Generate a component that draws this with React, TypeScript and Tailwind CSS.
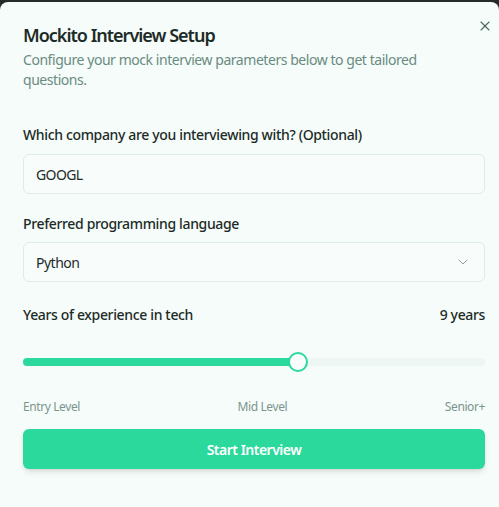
import { X, ChevronDown } from "lucide-react";

export default function App() {
  const years = 9;
  const pct = 59.5;

  return (
    <div className="min-h-screen bg-[#262a29] pt-[2px] font-['Noto_Sans','Open_Sans',sans-serif]">
      <div className="relative min-h-[505px] rounded-t-lg bg-[#f6fcfa] pl-[23px] pr-[14px] pt-[21px]">
        <button className="absolute right-[6px] top-[16px] text-[#4a6660]">
          <X className="h-4 w-4" strokeWidth={1.6} />
        </button>

        {/* Header */}
        <h2 className="text-[18px] font-semibold leading-[24px] tracking-[-1px] text-[#1c2b27]">
          Mockito Interview Setup
        </h2>
        <p className="mt-[3px] pr-[40px] text-[14px] leading-[20px] tracking-[-0.45px] text-[#6a8b81]">
          Configure your mock interview parameters below to get tailored questions.
        </p>

        {/* Company */}
        <label className="mt-[35px] block text-[14px] font-medium leading-[20px] tracking-[-0.35px] text-[#1c2b27]">
          Which company are you interviewing with? (Optional)
        </label>
        <div className="mt-[9px] flex h-[40px] items-center rounded-md border border-[#e1ebe8] bg-[#f8fcfb] px-[12px] text-[14px] tracking-[-0.6px] text-[#1c2b27]">
          GOOGL
        </div>

        {/* Language */}
        <label className="mt-[20px] block text-[14px] font-medium leading-[20px] tracking-[-0.35px] text-[#1c2b27]">
          Preferred programming language
        </label>
        <div className="mt-[8px] flex h-[40px] items-center justify-between rounded-md border border-[#e1ebe8] bg-[#f8fcfb] pl-[12px] pr-[13px] text-[14px] tracking-[-0.5px] text-[#1c2b27]">
          <span>Python</span>
          <ChevronDown className="h-4 w-4 text-[#8aa39c]" strokeWidth={1.5} />
        </div>

        {/* Experience */}
        <div className="mt-[23px] flex items-center justify-between text-[14px] font-medium leading-[20px] tracking-[-0.35px] text-[#1c2b27]">
          <span>Years of experience in tech</span>
          <span>{years} years</span>
        </div>
        <div className="relative mt-[33px] h-[8px] rounded-full bg-[#edf6f2]">
          <div className="h-full rounded-full bg-[#2ad99b]" style={{ width: `${pct}%` }} />
          <div
            className="absolute top-1/2 h-[20px] w-[20px] -translate-x-1/2 -translate-y-1/2 rounded-full border-2 border-[#2ad99b] bg-[#f8fcfb]"
            style={{ left: `${pct}%` }}
          />
        </div>
        <div className="mt-[33px] flex justify-between text-[12px] leading-[16px] tracking-[-0.4px] text-[#7a958d]">
          <span>Entry Level</span>
          <span>Mid Level</span>
          <span>Senior+</span>
        </div>

        <button className="mt-[14px] flex h-[40px] w-full items-center justify-center rounded-md bg-[#2ad99b] text-[14px] font-semibold tracking-[-0.5px] text-white shadow-md">
          Start Interview
        </button>
      </div>
    </div>
  );
}
